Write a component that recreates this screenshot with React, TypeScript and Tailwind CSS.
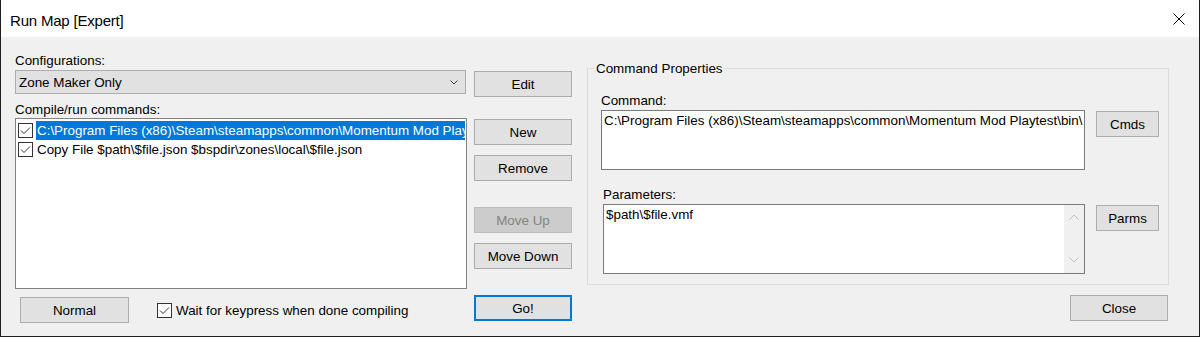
import React from "react";

const FONT = "font-['Liberation_Sans',Arial,sans-serif]";

function Btn({
  children,
  className = "",
}: {
  children: React.ReactNode;
  className?: string;
}) {
  return (
    <div
      className={`flex h-[26px] flex-none items-center justify-center border border-[#adadad] bg-[#e1e1e1] text-[13.4px] leading-[15px] text-black ${className}`}
    >
      {children}
    </div>
  );
}

function Check() {
  return (
    <div className="flex h-[15px] w-[15px] flex-none items-center justify-center border border-[#333333] bg-white">
      <svg width="13" height="13" viewBox="0 0 13 13">
        <path d="M2 6.5 L5 9.5 L11 3.5" fill="none" stroke="#333333" strokeWidth="1" />
      </svg>
    </div>
  );
}

function Chevron({ up = false, color }: { up?: boolean; color: string }) {
  return (
    <svg width="10" height="6" viewBox="0 0 10 6" className="block">
      <path
        d={up ? "M0.5 5.5 L5 1 L9.5 5.5" : "M0.5 0.5 L5 5 L9.5 0.5"}
        fill="none"
        stroke={color}
        strokeWidth="1"
      />
    </svg>
  );
}

export default function App() {
  return (
    <div className={`h-[337px] w-[1200px] bg-[#202020] px-px pb-px ${FONT}`}>
      <div className="flex h-full flex-col bg-[#f0f0f0] text-[13.4px] leading-[15px] text-black">
        {/* Title bar */}
        <div className="flex h-[37px] flex-none items-start justify-between bg-white pl-[9px] pt-[12px]">
          <div className="text-[15px] leading-[17px] tracking-[-0.2px] text-black">Run Map [Expert]</div>
          <svg width="12" height="12" viewBox="0 0 12 12" className="mr-[14px] mt-[1px] block">
            <path d="M0.5 0.5 L11.5 11.5 M11.5 0.5 L0.5 11.5" stroke="#000" strokeWidth="1" />
          </svg>
        </div>

        {/* Body */}
        <div className="flex flex-1 items-start pl-[14px]">
          {/* Left column */}
          <div className="flex w-[452px] flex-none flex-col pt-[16px]">
            <div>Configurations:</div>
            <div className="mt-[2px] flex h-[24px] w-[451px] items-center justify-between border border-[#adadad] bg-[#e1e1e1] pl-[3px] pr-[7px]">
              <span>Zone Maker Only</span>
              <svg width="8" height="5" viewBox="0 0 8 5" className="block">
                <path d="M0.5 0.5 L4 4 L7.5 0.5" fill="none" stroke="#404040" strokeWidth="1" />
              </svg>
            </div>
            <div className="mt-[8px]">Compile/run commands:</div>
            <div className="mt-[1px] h-[171px] w-[452px] border border-[#828282] bg-white pl-[2px] pr-[1px] pt-[2px]">
              <div className="flex h-[19px] items-center">
                <Check />
                <div className="ml-[3px] flex h-full min-w-0 flex-1 items-center overflow-hidden whitespace-nowrap bg-[#0078d7] pl-px text-white">
                  C:\Program Files (x86)\Steam\steamapps\common\Momentum Mod Playtest\bin\
                </div>
              </div>
              <div className="flex h-[19px] items-center">
                <Check />
                <div className="ml-[3px] whitespace-nowrap pl-px">
                  Copy File $path\$file.json $bspdir\zones\local\$file.json
                </div>
              </div>
            </div>
            <div className="mt-[8px] flex items-center pl-[5px]">
              <Btn className="w-[109px]">Normal</Btn>
              <div className="ml-[28px]">
                <Check />
              </div>
              <div className="ml-[4px] whitespace-nowrap">Wait for keypress when done compiling</div>
            </div>
          </div>

          {/* Middle column */}
          <div className="ml-[7px] flex w-[98px] flex-none flex-col pt-[34px]">
            <Btn>Edit</Btn>
            <Btn className="mt-[22px]">New</Btn>
            <Btn className="mt-[10px]">Remove</Btn>
            <Btn className="mt-[26px] !border-[#bfbfbf] !bg-[#cccccc] !text-[#838383]">Move Up</Btn>
            <Btn className="mt-[10px]">Move Down</Btn>
            <Btn className="mt-[26px] border-2 !border-[#0078d7]">Go!</Btn>
          </div>

          {/* Right column */}
          <div className="ml-[15px] flex w-[582px] flex-none flex-col pt-[24px]">
            <fieldset className="w-[582px] border border-[#dcdcdc] pb-[10px]">
              <legend className="ml-[6px] px-[2px] leading-[15px]">Command Properties</legend>
              <div className="pl-[13px]">
                <div className="mt-[17px]">Command:</div>
                <div className="mt-[2px] flex items-start gap-[11px]">
                  <div className="h-[60px] w-[484px] overflow-hidden whitespace-nowrap border border-[#7a7a7a] bg-white pl-[2px] pt-[2px]">
                    C:\Program Files (x86)\Steam\steamapps\common\Momentum Mod Playtest\bin\
                  </div>
                  <Btn className="mt-px w-[63px]">Cmds</Btn>
                </div>
                <div className="ml-[2px] mt-[17px]">Parameters:</div>
                <div className="ml-[2px] mt-[2px] flex items-start gap-[11px]">
                  <div className="flex h-[70px] w-[482px] border border-[#7a7a7a] bg-white">
                    <div className="flex-1 pl-[2px] pt-[2px]">$path\$file.vmf</div>
                    <div className="flex w-[20px] flex-col items-center justify-between bg-[#f0f0f0] pb-[10px] pt-[9px]">
                      <Chevron up color="#c0c0c0" />
                      <Chevron color="#c0c0c0" />
                    </div>
                  </div>
                  <Btn className="mt-px w-[63px]">Parms</Btn>
                </div>
              </div>
            </fieldset>
            <Btn className="mr-px mt-[10px] w-[98px] self-end">Close</Btn>
          </div>
        </div>
      </div>
    </div>
  );
}
